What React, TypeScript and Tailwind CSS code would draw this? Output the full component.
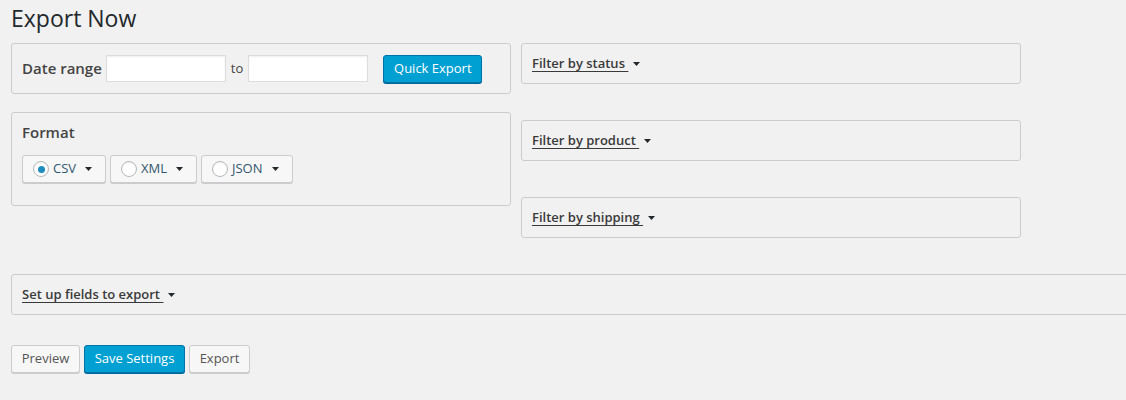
import React from "react";

const Caret = () => (
  <svg width="7" height="4" viewBox="0 0 7 4" className="inline-block ml-[5px]" aria-hidden>
    <path d="M0 0 L7 0 L3.5 4 Z" fill="#23282d" />
  </svg>
);

const Box = ({ className = "", children }: { className?: string; children?: React.ReactNode }) => (
  <div className={`border border-[#cccccc] rounded-[3px] bg-[#f1f1f1] ${className}`}>{children}</div>
);

const FilterBox = ({ label }: { label: string }) => (
  <Box className="h-[41px] flex items-center px-[10px]">
    <span className="text-[13px] font-semibold text-[#3a3a3a] underline underline-offset-[3px] decoration-[1px] whitespace-pre">{label + " "}</span>
    <Caret />
  </Box>
);

const Radio = ({ label, checked, w }: { label: string; checked?: boolean; w: string }) => (
  <div className={`h-[28px] ${w} bg-[#f7f7f7] border border-[#cccccc] rounded-[3px] shadow-[0_1px_0_#cccccc] flex items-center pl-[10px]`}>
    <span className="w-[16px] h-[16px] rounded-full border border-[#b4b9be] bg-white flex items-center justify-center shadow-[inset_0_1px_2px_rgba(0,0,0,0.07)]">
      {checked && <span className="w-[7px] h-[7px] rounded-full bg-[#1e8cbe]" />}
    </span>
    <span className="ml-[4px] text-[13px] text-[#32566e]">{label}</span>
    <span className="ml-[4px] flex items-center">
      <Caret />
    </span>
  </div>
);

const Btn = ({ children, primary, w }: { children: React.ReactNode; primary?: boolean; w: string }) => (
  <div
    className={`h-[28px] ${w} rounded-[3px] flex items-center justify-center text-[13px] ${
      primary
        ? "bg-[#00a0d2] border border-[#0073aa] text-white shadow-[0_1px_0_#006799]"
        : "bg-[#f7f7f7] border border-[#cccccc] text-[#555555] shadow-[0_1px_0_#cccccc]"
    }`}
  >
    {children}
  </div>
);

export default function App() {
  return (
    <div
      className="w-[1126px] h-[400px] overflow-hidden bg-[#f1f1f1] pl-[11px]"
      style={{ fontFamily: '"Open Sans", "Noto Sans", sans-serif' }}
    >
      <h1 className="text-[23px] leading-[29px] font-normal text-[#23282d] pt-[4px]">Export Now</h1>
      <div className="flex gap-[10px] mt-[10px]">
        <div className="w-[500px] flex flex-col gap-[18px]">
          <Box className="h-[51px] flex items-center px-[10px]">
            <span className="text-[15px] font-semibold text-[#444444]">Date range</span>
            <div className="ml-[4px] w-[120px] h-[27px] bg-white border border-[#dddddd] shadow-[inset_0_1px_2px_rgba(0,0,0,0.07)]" />
            <span className="mx-[5px] text-[13px] text-[#444444]">to</span>
            <div className="w-[120px] h-[27px] bg-white border border-[#dddddd] shadow-[inset_0_1px_2px_rgba(0,0,0,0.07)]" />
            <div className="ml-[15px]">
              <Btn primary w="w-[99px]">Quick Export</Btn>
            </div>
          </Box>
          <Box className="h-[94px] px-[10px] pt-[8px]">
            <div className="text-[15px] font-semibold text-[#444444] leading-[22px]">Format</div>
            <div className="flex gap-[4px] mt-[12px]">
              <Radio label="CSV" checked w="w-[84px]" />
              <Radio label="XML" w="w-[87px]" />
              <Radio label="JSON" w="w-[92px]" />
            </div>
          </Box>
        </div>
        <div className="w-[500px] flex flex-col gap-[36px]">
          <FilterBox label="Filter by status" />
          <FilterBox label="Filter by product" />
          <FilterBox label="Filter by shipping" />
        </div>
      </div>
      <div className="mt-[36px] w-[1200px]">
        <FilterBox label="Set up fields to export" />
      </div>
      <div className="flex gap-[4px] mt-[30px]">
        <Btn w="w-[69px]">Preview</Btn>
        <Btn primary w="w-[101px]">Save Settings</Btn>
        <Btn w="w-[61px]">Export</Btn>
      </div>
    </div>
  );
}
